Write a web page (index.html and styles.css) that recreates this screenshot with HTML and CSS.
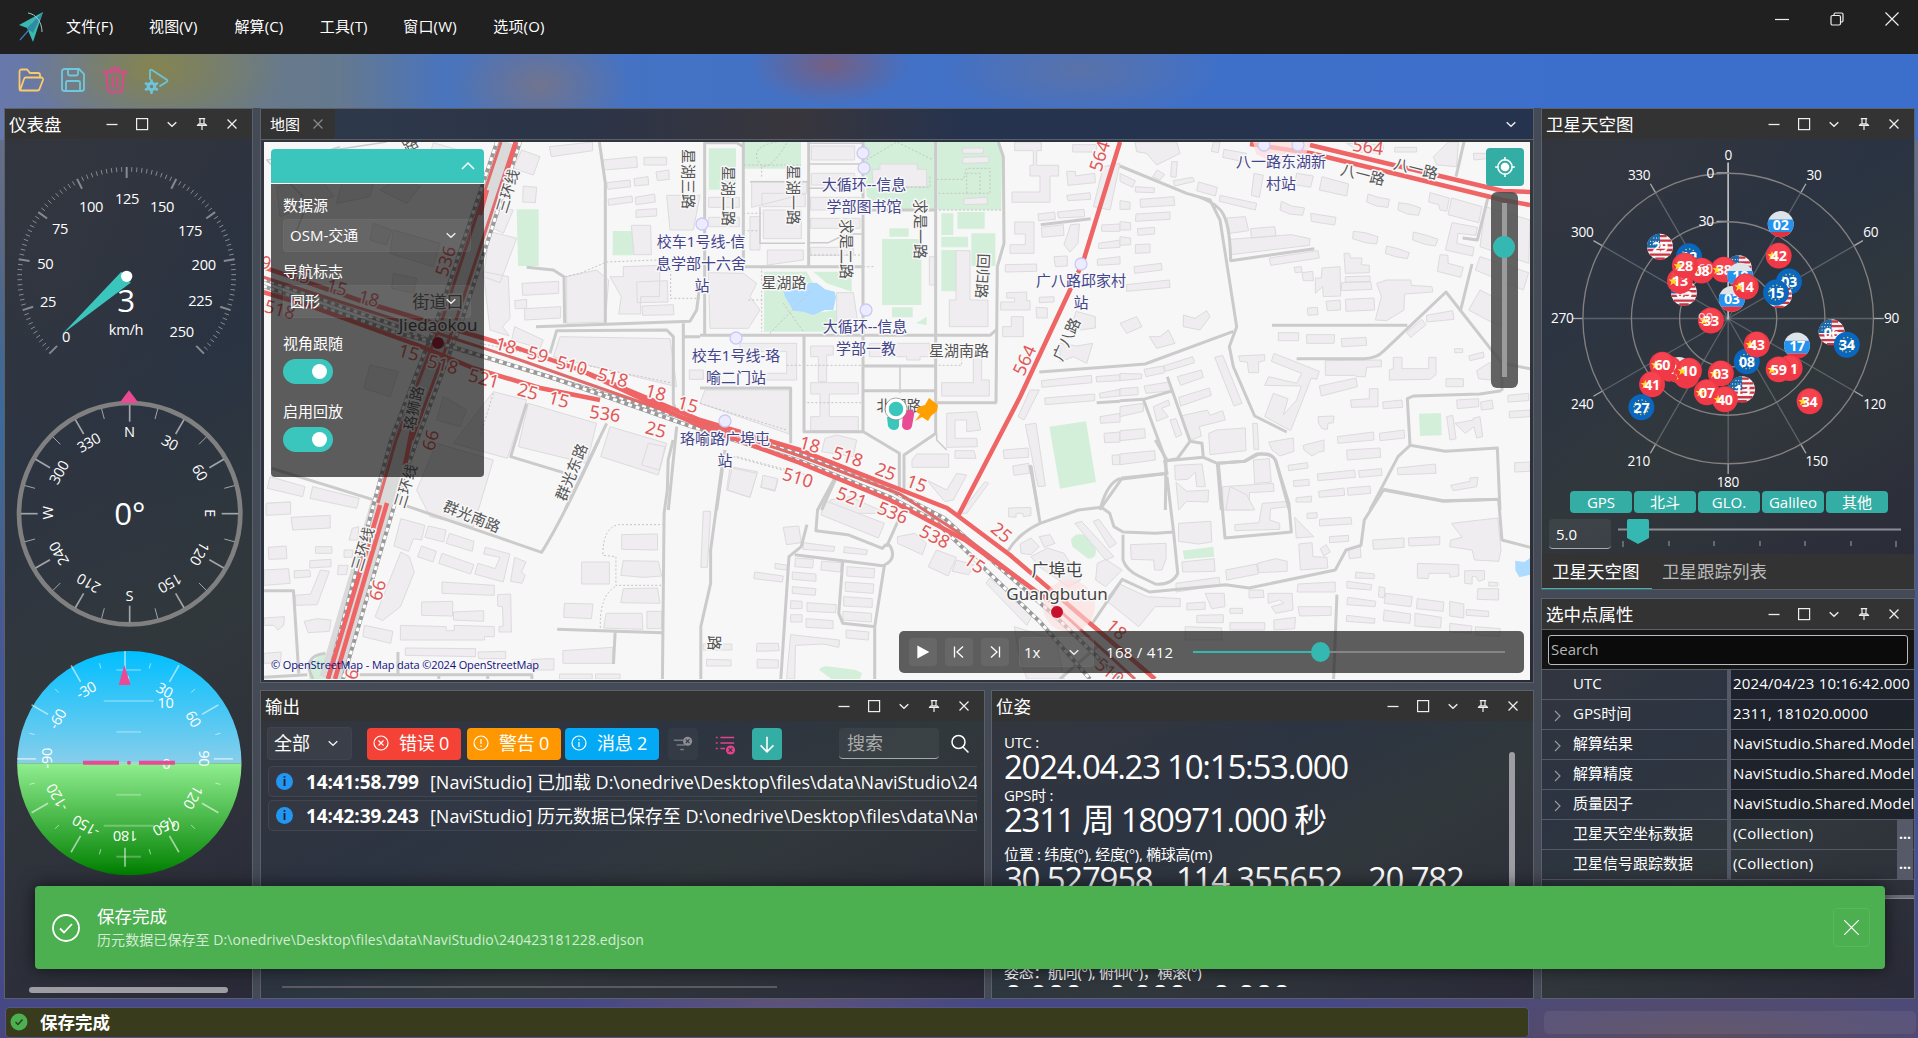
FILE: index.html
```html
<!DOCTYPE html>
<html lang="zh-CN">
<head>
<meta charset="utf-8">
<title>NaviStudio</title>
<link rel="stylesheet" href="styles.css">
</head>
<body>
<svg class="defs" aria-hidden="true">
  <symbol id="i-min" viewBox="0 0 16 16"><path d="M2.5 8.5h11" stroke-width="1.3"/></symbol>
  <symbol id="i-max" viewBox="0 0 16 16"><rect x="2.6" y="2.6" width="11" height="11" stroke-width="1.2"/></symbol>
  <symbol id="i-down" viewBox="0 0 16 16"><path d="M3.7 6.3 8 10.3l4.300-4" stroke-width="1.4"/></symbol>
  <symbol id="i-pin" viewBox="0 0 16 16"><path d="M4.800 2.700h6.400M6 3v5M10 3v5M3.500 9.300c.3-1 1-1.500 2.500-1.500h4c1.500 0 2.200.5 2.500 1.500zM8 9.500v4.500" stroke-width="1.2"/></symbol>
  <symbol id="i-x" viewBox="0 0 16 16"><path d="m3.500 3.500 9 9M12.500 3.500l-9 9" stroke-width="1.3"/></symbol>
  <symbol id="i-tools" viewBox="0 0 136 16">
    <use href="#i-min" x="0" width="16" height="16"/><use href="#i-max" x="30" width="16" height="16"/><use href="#i-down" x="60" width="16" height="16"/><use href="#i-pin" x="90" width="16" height="16"/><use href="#i-x" x="120" width="16" height="16"/>
  </symbol>
</svg>

<header class="titlebar">
  <svg class="logo" viewBox="0 0 26 32"><path d="M25 1 1 14l8 3 6 14z" fill="#3ab9b0"/><path d="m9 17 16-16-10 21z" fill="#2f8f96"/><path d="M2 29 23 5" stroke="#3b7fc4" stroke-width="1.200"/><path d="M10 2c8 1 14 9 14 19" fill="none" stroke="#9cc" stroke-width="1"/></svg>
  <nav class="menu"><span>文件(F)</span><span>视图(V)</span><span>解算(C)</span><span>工具(T)</span><span>窗口(W)</span><span>选项(O)</span></nav>
  <div class="win">
    <svg viewBox="0 0 16 16"><path d="M1 8.500h14"/></svg>
    <svg viewBox="0 0 16 16"><rect x="2" y="4.500" width="9.500" height="9.500" rx="1.500"/><path d="M5 4.500V3.500a1.500 1.500 0 0 1 1.500-1.500h6a1.500 1.500 0 0 1 1.500 1.500v6a1.500 1.500 0 0 1-1.500 1.500h-1"/></svg>
    <svg viewBox="0 0 16 16"><path d="m1.500 1.500 13 13M14.500 1.500l-13 13"/></svg>
  </div>
</header>

<div class="toolbar">
  <svg viewBox="0 0 28 28" stroke="#fbcb6b"><path d="M2.500 22V5.500a2 2 0 0 1 2-2H10l3 3.500h8a2 2 0 0 1 2 2v2M3 24.500 7 13a2 2 0 0 1 2-1.500h15a2 2 0 0 1 2 2.500l-3.500 9a2 2 0 0 1-2 1.500H4.500a2 2 0 0 1-2-2.500"/></svg>
  <svg viewBox="0 0 28 28" stroke="#70c8de"><path d="M3 5.500a2.500 2.500 0 0 1 2.500-2.500H20l5 5v14.500a2.500 2.500 0 0 1-2.500 2.500h-17A2.500 2.500 0 0 1 3 22.500zM9 3v5a1.500 1.500 0 0 0 1.500 1.500h7A1.500 1.500 0 0 0 19 8V3M7 25v-8.500A1.500 1.500 0 0 1 8.500 15h11a1.500 1.500 0 0 1 1.500 1.500V25"/></svg>
  <svg viewBox="0 0 28 28" stroke="#e54291"><path d="M2 6h24M10 5.500V4a2 2 0 0 1 2-2h4a2 2 0 0 1 2 2v1.500M5 6.500l2 17.500a2.500 2.500 0 0 0 2.500 2h9a2.500 2.500 0 0 0 2.500-2l2-17.500M11.500 11v10M16.500 11v10"/></svg>
  <svg viewBox="0 0 28 28" stroke="#6cc4dc"><path d="M7 13V5q0-2 2-1l14.500 9.500q1.800 1.300 0 2.500L17 20"/><circle cx="8.500" cy="20.500" r="3.300" stroke-width="3"/><path d="M8.500 14.500v2M8.500 24.500v2.500M3 17.500l2 1M12 22.500l2 1M3 23.500l2-1M12 18.500l2-1" stroke-width="2.600"/></svg>
</div>

<main class="dock">
  <section class="panel dash">
    <h2 class="head">仪表盘<svg class="tools"><use href="#i-tools"/></svg></h2>
    <svg class="speed" id="speed" viewBox="15 87 744 720"></svg>
    <svg class="compass" id="compass" viewBox="15 807 744 753"></svg>
    <svg class="attitude" id="attitude" viewBox="15 0 744 760"></svg>
    <div class="hscroll"></div>
  </section>

  <div class="center">
    <section class="panel mapdoc">
      <div class="tabs"><span class="tab">地图<svg class="ic dim"><use href="#i-x"/></svg></span><svg class="ic"><use href="#i-down"/></svg></div>
      <div class="map">
        <svg class="mapsvg" id="map" viewBox="264 142 1266 537"></svg>
        <div class="options">
          <div class="ohead"><svg viewBox="0 0 16 16"><path d="m2 11 6-6 6 6"/></svg></div>
          <div class="obody">
            <label>数据源</label><div class="combo">OSM-交通<svg class="ic"><use href="#i-down"/></svg></div>
            <label>导航标志</label><div class="combo">圆形<svg class="ic"><use href="#i-down"/></svg></div>
            <label>视角跟随</label><i class="toggle"></i>
            <label>启用回放</label><i class="toggle"></i>
          </div>
        </div>
        <div class="zoomctl">
          <div class="locate"><svg viewBox="0 0 20 20"><circle cx="10" cy="10" r="6.500"/><circle cx="10" cy="10" r="3.200" class="f"/><path d="M10 1v3M10 16v3M1 10h3M16 10h3"/></svg></div>
          <div class="vslider"><i></i></div>
        </div>
        <div class="player">
          <b><svg viewBox="0 0 28 28"><path class="f" d="M9 8.500v11l10-5.500z"/></svg></b>
          <b><svg viewBox="0 0 28 28"><path d="M9.500 8.500v11M18 8.500 12 14l6 5.500"/></svg></b>
          <b><svg viewBox="0 0 28 28"><path d="M18.500 8.500v11M10 8.500l6 5.500-6 5.500"/></svg></b>
          <div class="combo rate">1x<svg class="ic"><use href="#i-down"/></svg></div>
          <span class="count">168 / 412</span>
          <div class="hslider"><i></i></div>
        </div>
      </div>
    </section>

    <div class="bottom">
      <section class="panel output">
        <h2 class="head">输出<svg class="tools"><use href="#i-tools"/></svg></h2>
        <div class="obar">
          <div class="combo all">全部<svg class="ic"><use href="#i-down"/></svg></div>
          <span class="badge red"><svg viewBox="0 0 16 16"><circle cx="8" cy="8" r="7"/><path d="m5.500 5.500 5 5M10.500 5.500l-5 5"/></svg>错误 0</span>
          <span class="badge orange"><svg viewBox="0 0 16 16"><circle cx="8" cy="8" r="7"/><path d="M8 4v5M8 10.500v1.500"/></svg>警告 0</span>
          <span class="badge blue"><svg viewBox="0 0 16 16"><circle cx="8" cy="8" r="7"/><path d="M8 7v5M8 4v1.500"/></svg>消息 2</span>
          <span class="sq ghost"><svg viewBox="0 0 24 24" stroke="#777a80"><path d="M2 8h10M5 13h9M9 18h4"/><circle cx="17" cy="9" r="5" fill="#8d8f94" stroke="none"/><path d="m15 7 4 4M19 7l-4 4" stroke="#333" stroke-width="1.200"/></svg></span>
          <span class="sq"><svg viewBox="0 0 24 24" stroke="#e54291"><path d="M2 5h2M7 5h15M2 11h2M7 11h15M2 17h2M7 17h5"/><circle cx="18" cy="18.500" r="5" fill="#e54291" stroke="none"/><path d="m16 16.500 4 4M20 16.500l-4 4" stroke="#333" stroke-width="1.200"/></svg></span>
          <span class="sq go"><svg viewBox="0 0 24 24" stroke="#fff"><path d="M12 4v16M5 13.500l7 7 7-7"/></svg></span>
          <span class="find">搜索</span>
          <svg class="mag" viewBox="0 0 20 20"><circle cx="8.500" cy="8" r="6.500"/><path d="m13 13 5.500 5.500"/></svg>
        </div>
        <div class="log"><em>i</em><strong>14:41:58.799</strong><span>[NaviStudio] 已加载 D:\onedrive\Desktop\files\data\NaviStudio\240423181228.edjson</span></div>
        <div class="log"><em>i</em><strong>14:42:39.243</strong><span>[NaviStudio] 历元数据已保存至 D:\onedrive\Desktop\files\data\NaviStudio\240423181228.edjson</span></div>
        <div class="oscroll"></div>
      </section>
      <section class="panel pose">
        <h2 class="head">位姿<svg class="tools"><use href="#i-tools"/></svg></h2>
        <div class="pbody">
          <div class="ptext">
            <small>UTC :</small><p>2024.04.23 10:15:53.000</p>
            <small>GPS时 :</small><p>2311 周 180971.000 秒</p>
            <small class="gap">位置 : 纬度(°), 经度(°), 椭球高(m)</small><p class="pos"><span>30.527958</span><span>114.355652</span><span>20.782</span></p>
            <small class="att">姿态：航向(°), 俯仰(°)，横滚(°)</small><p class="angles"><span>0.000</span><span>0.000</span><span>0.000</span></p>
          </div>
          <i class="vbar"></i>
        </div>
      </section>
    </div>
  </div>

  <div class="right">
    <section class="panel sky">
      <h2 class="head">卫星天空图<svg class="tools"><use href="#i-tools"/></svg></h2>
      <svg class="skysvg" id="sky" viewBox="18 117 1119 1055"></svg>
      <div class="chips"><span>GPS</span><span>北斗</span><span>GLO.</span><span>Galileo</span><span>其他</span></div>
      <div class="scale"><span class="num">5.0</span>
        <svg viewBox="0 0 284 28"><path d="M0 10.500h283" stroke="#8b9096" stroke-width="2"/><path d="M5 22v6M51 22v5M96 22v5M142 22v5M187 22v5M233 22v5M278 22v6" stroke="#777d83" stroke-width="1.500"/><path d="M9 2q0-2 2-2h18q2 0 2 2v17l-11 6-11-6z" fill="#35b8b1"/></svg></div>
      <div class="stabs"><span class="on">卫星天空图</span><span>卫星跟踪列表</span></div>
    </section>
    <section class="panel props">
      <h2 class="head">选中点属性<svg class="tools"><use href="#i-tools"/></svg></h2>
      <div class="psearch"><span>Search</span></div>
      <div class="row"><u></u><span>UTC</span><b>2024/04/23 10:16:42.000</b></div>
      <div class="row"><u><svg viewBox="0 0 8 12"><path d="m1 1 5 5-5 5"/></svg></u><span>GPS时间</span><b>2311, 181020.0000</b></div>
      <div class="row"><u><svg viewBox="0 0 8 12"><path d="m1 1 5 5-5 5"/></svg></u><span>解算结果</span><b class="model">NaviStudio.Shared.Models</b></div>
      <div class="row"><u><svg viewBox="0 0 8 12"><path d="m1 1 5 5-5 5"/></svg></u><span>解算精度</span><b class="model">NaviStudio.Shared.Models</b></div>
      <div class="row"><u><svg viewBox="0 0 8 12"><path d="m1 1 5 5-5 5"/></svg></u><span>质量因子</span><b class="model">NaviStudio.Shared.Models</b></div>
      <div class="row coll"><u></u><span>卫星天空坐标数据</span><b>(Collection)</b><i>...</i></div>
      <div class="row coll"><u></u><span>卫星信号跟踪数据</span><b>(Collection)</b><i>...</i></div>
      <div class="endline"></div>
    </section>
  </div>
</main>

<footer class="status">
  <div class="msg"><svg viewBox="0 0 18 18"><circle cx="9" cy="9" r="8.500" fill="#4caf50"/><path d="m5.500 9 2.500 2.500 4.500-5" fill="none" stroke="#26401f" stroke-width="1.400"/></svg>保存完成</div>
  <div class="prog"></div>
</footer>

<div class="toast">
  <svg class="ok" viewBox="0 0 30 30"><circle cx="15" cy="15" r="13"/><path d="m9 15.500 4 4 8-8.500"/></svg>
  <div class="tmsg"><h3>保存完成</h3><p>历元数据已保存至 D:\onedrive\Desktop\files\data\NaviStudio\240423181228.edjson</p></div>
  <div class="tclose"><svg viewBox="0 0 16 16"><path d="m0 0 16 16M16 0 0 16"/></svg></div>
</div>
<script src="app.js"></script>
</body>
</html>
```
FILE: styles.css
```css
* { box-sizing: border-box; margin: 0; padding: 0; }
body {
  width: 1918px; height: 1038px; overflow: hidden; position: relative;
  display: flex; flex-direction: column;
  color: #fff; font: 15px/20px "Open Sans", "Noto Sans CJK SC", sans-serif;
  background:
    radial-gradient(ellipse 130px 70px at 155px 68px, #85844f, #85844f00),
    radial-gradient(ellipse 90px 60px at 540px 85px, #71748e, #71748e00),
    radial-gradient(ellipse 80px 40px at 830px 65px, #745f82, #745f8200),
    radial-gradient(ellipse 140px 50px at 1080px 70px, #5a72a8, #5a72a800),
    radial-gradient(ellipse 60px 200px at 0 420px, #3b6a9c, #3b6a9c00),
    radial-gradient(ellipse 420px 80px at 1700px 1038px, #5a4d62, #5a4d6200),
    radial-gradient(ellipse 200px 60px at 780px 1010px, #5f5377, #5f537700),
    linear-gradient(90deg, #6878ab 0, #6a7a88 200px, #65798f 340px, #4a74bb 440px, #4472c4 660px, #3c6fcc 1600px, #3c6fcb) 0 0 / 100% 140px no-repeat,
    linear-gradient(#6f7690, #50607c 40%, #4055a2 75%, #474680);
}
svg { flex: none; fill: none; display: block; }
.defs { position: absolute; width: 0; height: 0; }
.ic { width: 16px; height: 16px; stroke: #eee; }
.dim { stroke: #888; }

.titlebar { height: 54px; background: #202020; display: flex; align-items: center; padding: 0 18px; }
.logo { width: 26px; height: 32px; }
.menu { display: flex; margin: -2px 0 0 22px; flex: 1; letter-spacing: .15px; }
.menu span { width: 85.400px; white-space: nowrap; }
.menu span:first-child { width: 83px; }
.menu span:nth-child(4) { width: 83.500px; }
.menu span:nth-child(5) { width: 90px; }
.win { display: flex; gap: 39px; margin-top: -16px; }
.win svg { width: 16px; height: 16px; stroke: #eee; stroke-width: 1.200; }
.toolbar { height: 54px; display: flex; align-items: center; gap: 14px; padding: 0 0 2px 17px; }
.toolbar svg { width: 28px; height: 28px; stroke-width: 1.800; stroke-linecap: round; }

.dock { height: 891px; margin: 0 3px 0 4px; display: flex; gap: 7px; background: #454a57; }
.center { width: 1274px; display: flex; flex-direction: column; gap: 7px; }
.right { width: 374px; display: flex; flex-direction: column; gap: 8px; }
.bottom { display: flex; gap: 6px; height: 309px; }
.panel { border: 1px solid #5c6068; overflow: hidden;
  background: radial-gradient(ellipse at 20% 10%, #34384080, transparent 60%), linear-gradient(150deg, #32343c, #2a3342 35%, #31383c 60%, #2a2a38); }
.head { height: 30px; background: #333; display: flex; align-items: center; justify-content: space-between; padding: 0 12px 0 4px; font-size: 17.500px; font-weight: 400; }
.tools { width: 136px; height: 16px; stroke: #eee; }

.dash { width: 249px; }
.speed { width: 248px; height: 240px; }
.compass { width: 248px; height: 251px; }
.attitude { width: 248px; height: 253px; }
.hscroll { width: 199px; height: 6px; border-radius: 3px; background: #9d9da3; margin: 104px 0 0 24px; }

.mapdoc { height: 575px; }
.tabs { height: 31px; display: flex; align-items: center; justify-content: space-between; padding-right: 14px; background: linear-gradient(90deg, #2d3a4a, #2c3448 25%, #38363c 42%, #26334e 55%, #26334e); border-bottom: 1px solid #5c6068; }
.tab { width: 74px; height: 30px; background: #333; display: flex; align-items: center; padding-left: 9px; gap: 10px; white-space: nowrap; }
.map { margin: 2px 3px 3px; height: 538px; overflow: hidden; background: #f7f7f7; position: relative; }
.mapsvg { width: 1266px; height: 537px; font-family: "Noto Sans", "Noto Sans CJK SC", sans-serif; text-anchor: middle; }
.mapsvg text { dominant-baseline: central; paint-order: stroke; stroke: #f8f8f8; stroke-width: 3px; stroke-linejoin: round; font-size: 15px; fill: #555; }
.mapsvg .stop { fill: #44448c; }
.mapsvg .ref { fill: #e25757; font-size: 18px; }
.mapsvg .metro { fill: #444; font-size: 17px; }
.mapsvg .credit { fill: #101080; font-size: 11px; text-anchor: start; stroke: none; font-family: "Open Sans"; }
.mapsvg path { vector-effect: non-scaling-stroke; }
.bld { fill: #efedef; stroke: #dddbdd; stroke-width: 1; }
.park { fill: #d3efd9; }
.lake { fill: #addbff; }
.road { stroke: #cbcbcb; stroke-width: 3; stroke-linejoin: round; }
.foot { stroke: #c4c4c4; stroke-width: 1; stroke-dasharray: 2 2; }
.wide { stroke: #dadada; stroke-width: 20; }
.red { stroke: #ef6464; stroke-width: 4.500; stroke-linejoin: round; }
.redthin { stroke: #e06b6b; stroke-width: 3; }
.rail { stroke: #9a9a9a; stroke-width: 4; }
.railw { stroke: #fff; stroke-width: 3; stroke-dasharray: 4 4; }
.halt { fill: #ecebff; stroke: #cbc9f5; stroke-width: 1.300; }

.options { position: absolute; left: 7px; top: 7px; width: 213px; height: 328px; border-radius: 4px; overflow: hidden; }
.ohead { height: 35px; background: #3ac6bd; border-bottom: 1px solid #fff; display: flex; align-items: center; justify-content: flex-end; padding-right: 8px; }
.ohead svg { width: 16px; height: 16px; stroke: #fff; stroke-width: 1.500; }
.obody { height: 293px; background: rgba(15, 15, 15, .67); padding: 11px 12px; display: flex; flex-direction: column; }
.obody label { line-height: 20px; height: 24px; flex: none; }
.combo { height: 33px; background: #ffffff10; border: 1px solid #ffffff08; border-radius: 4px; display: flex; align-items: center; justify-content: space-between; padding: 0 11px 2px 6px; }
.obody .combo { width: 188px; flex: none; margin-bottom: 9px; }
.obody label:nth-of-type(n+3) { margin-top: 6px; height: 26px; }
.obody label:nth-of-type(4) { margin-top: 0; }
.toggle { width: 50px; height: 25px; border-radius: 13px; background: #3ac6bd; flex: none; padding: 5px; display: flex; justify-content: flex-end; margin-bottom: 17px; }
.toggle::after { content: ""; width: 15px; height: 15px; border-radius: 50%; background: #fff; margin-right: 1px; }
.zoomctl { position: absolute; right: 6px; top: 6px; width: 38px; }
.locate { width: 38px; height: 38px; border-radius: 4px; background: #34ada4; padding: 8px; }
.locate svg { width: 22px; height: 22px; stroke: #fff; stroke-width: 1.400; }
.f { fill: #fff; }
.vslider { width: 27px; height: 196px; margin: 6px 0 0 5px; border-radius: 6px; background: #4b4b4bdd; padding: 11px; }
.vslider::before { content: ""; display: block; width: 5px; height: 174px; background: #9b9b9b; }
.vslider i { display: block; width: 22px; height: 22px; border-radius: 50%; background: #35b8b1; margin: -141px 0 0 -9px; }
.player { position: absolute; left: 635px; bottom: 7px; width: 625px; height: 42px; border-radius: 5px; background: rgba(30, 30, 30, .71); display: flex; align-items: center; padding: 0 19px 0 10px; }
.player b { width: 28px; height: 28px; border-radius: 4px; background: #ffffff10; margin-right: 8px; }
.player b svg { width: 28px; height: 28px; stroke: #fff; stroke-width: 1.300; }
.player .rate { width: 75px; height: 30px; margin-left: 2px; padding-left: 4px; padding-bottom: 0; }
.count { margin-left: 12px; width: 87px; letter-spacing: .3px; white-space: nowrap; }
.hslider { flex: 1; height: 2px; background: linear-gradient(90deg, #35b8b1 127px, #858585 0); }
.hslider i { display: block; width: 19px; height: 20px; border-radius: 50%; background: #35b8b1; margin: -9px 0 0 118px; }

.output { width: 725px; }
.obar { display: flex; align-items: center; padding: 6px 0 0 6px; font-size: 18px; height: 39px; }
.all { width: 85px; margin-right: 15px; padding-right: 10px; background: #ffffff0c; }
.badge { width: 94px; height: 32px; border-radius: 4px; display: flex; align-items: center; padding: 0 0 2px 6px; gap: 10px; white-space: nowrap; letter-spacing: -.2px; }
.badge svg { width: 16px; height: 16px; stroke: #fff; stroke-width: 1.200; }
.badge.red { background: #f44336; margin-right: 6px; }
.badge.orange { background: #ff9800; margin-right: 4px; }
.badge.blue { background: #03a9f4; margin-right: 9px; }
.sq { width: 30px; height: 32px; border-radius: 4px; margin-right: 12px; display: flex; align-items: center; justify-content: center; }
.sq svg { width: 22px; height: 22px; stroke-width: 1.700; }
.sq.ghost { background: #ffffff08; }
.sq.go { background: #34ada4; margin-right: 57px; }
.find { width: 100px; height: 31px; border-radius: 4px; border-bottom: 1px solid #aaa; background: #ffffff0d; color: #aaa; padding: 5px 8px; }
.mag { width: 20px; height: 20px; stroke: #fff; stroke-width: 1.500; margin-left: 11px; }
.log { margin: 6px 7px -3px 7px; height: 31px; border: 1px solid #ffffff12; border-right: 0; border-radius: 5px 0 0 5px; background: #ffffff05; display: flex; align-items: center; font-size: 18px; white-space: nowrap; overflow: hidden; letter-spacing: -.02px; flex: none; }
.log em { width: 17px; height: 17px; border-radius: 50%; background: #2196f3; color: #223; font: 700 12px/17px "Open Sans", sans-serif; text-align: center; margin-left: 7px; flex: none; }
.log strong { margin-left: 13px; width: 124px; font-size: 19px; letter-spacing: -.1px; flex: none; }
.oscroll { height: 2px; width: 495px; background: #5b5b61; margin: 158px 0 0 21px; }

.pose { width: 543px; }
.pbody { display: flex; height: 266px; padding-left: 12px; overflow: hidden; }
.ptext { width: 505px; padding-top: 11px; white-space: nowrap; }
.pose small { display: block; font-size: 15px; line-height: 20px; letter-spacing: -.3px; }
.pose p { font-size: 33px; line-height: 29px; letter-spacing: -1.250px; height: 33px; }
.pose small.gap { margin-top: 6px; }
.pos span:first-child { display: inline-block; width: 172px; }
.pos span:nth-child(2) { display: inline-block; width: 192px; }
.pose small.att { margin-top: 65px; }
.angles span { display: inline-block; width: 104px; margin-top: -1px; }
.vbar { width: 6px; height: 200px; border-radius: 3px; background: #9d9da3; margin-top: 31px; }

.sky { height: 482px; flex: none; }
.skysvg { width: 372px; height: 352px; }
.chips { display: flex; gap: 2px; margin: 0 0 6px 28px; }
.chips span { width: 62px; height: 22px; border-radius: 4px; background: #34ada4; text-align: center; line-height: 22px; }
.scale { display: flex; padding-left: 7px; height: 35px; }
.num { width: 62px; height: 30px; background: #ffffff10; border-radius: 4px; border-bottom: 1px solid #aaa; padding: 5px 7px; margin-right: 7px; }
.scale svg { width: 284px; height: 28px; }
.stabs { height: 36px; background: #333; display: flex; font-size: 17.500px; line-height: 34px; color: #bbb; }
.stabs span { width: 110px; padding-left: 10px; white-space: nowrap; }
.stabs .on { color: #fff; border-bottom: 2px solid #35b8b1; }

.props { height: 401px; flex: none; }
.props .head { line-height: 18px; padding-bottom: 1px; }
.psearch { height: 41px; background: #141414; padding: 5px 6px; border-top: 1px solid #5c6068; border-bottom: 1px solid #5c6068; }
.psearch span { display: block; height: 30px; border: 1px solid #bbb; border-radius: 3px; background: #0b0b0b; color: #b5b5b5; padding: 3px 2px; }
.row { height: 30px; border-bottom: 1px solid #565a68; display: flex; white-space: nowrap; overflow: hidden; line-height: 27px; }
.row u { width: 31px; padding: 10px 0 0 12px; text-decoration: none; }
.row u svg { width: 8px; height: 12px; stroke: #999; stroke-width: 1.200; }
.row span { width: 154px; }
.row b { flex: 1; font-weight: 400; border-left: 4px solid #565a68; padding-left: 2px; background: #151820a0; overflow: hidden; letter-spacing: .2px; }
.row.coll b { background: none; }
.row i { width: 16px; background: #565a68; font: 700 14px/28px "Open Sans"; text-align: center; margin-right: 1px; }
.endline { height: 4px; margin-top: 15px; background: #6a6c76; border-bottom: 1px solid #888; }

.status { height: 39px; padding: 8px 2px 0 5px; display: flex; gap: 15px; }
.msg { width: 1524px; height: 31px; background: #383b1c; border: 1px solid #54568a; border-radius: 4px; display: flex; align-items: center; gap: 12px; padding: 0 0 2px 4px; font-size: 17.500px; font-weight: 700; }
.msg svg { width: 18px; height: 18px; }
.prog { width: 372px; height: 23px; margin-top: 4px; border-radius: 5px; background: #ffffff10; }

.toast { position: absolute; left: 35px; top: 886px; width: 1850px; height: 83px; border-radius: 4px; background: #4caf50; box-shadow: 0 0 18px #0009; display: flex; align-items: center; padding: 0 15px 0 16px; }
.ok { width: 30px; height: 30px; stroke: #fff; stroke-width: 1.800; }
.tmsg { flex: 1; margin-left: 16px; }
.toast h3 { font-size: 17.500px; font-weight: 400; line-height: 24px; }
.toast p { font-size: 14px; line-height: 22px; color: #d4ecd5; letter-spacing: .08px; margin-top: 1px; }
.tclose { width: 37px; height: 39px; border: 1px solid #5bb75f; border-radius: 4px; padding: 11px 10px; }
.tclose svg { width: 15px; height: 15px; stroke: #fff; stroke-width: 1.300; }

.speed text, .compass text, .attitude text, .skysvg text { fill: #fff; font-size: 44px; text-anchor: middle; dominant-baseline: central; letter-spacing: -1px; }
```
FILE: app.js
```js
const rad = d => d * Math.PI / 180;
const at = (cx, cy, r, a) => [cx + r * Math.sin(rad(a)), cy - r * Math.cos(rad(a))];
const tick = (cx, cy, a, r1, r2, w, c) => {
  const [x1, y1] = at(cx, cy, r1, a), [x2, y2] = at(cx, cy, r2, a);
  return `<path d="M${x1} ${y1}L${x2} ${y2}" stroke="${c}" stroke-width="${w}"/>`;
};
const label = (t, x, y, rot = 0, extra = '') =>
  `<text ${extra} transform="translate(${x} ${y}) rotate(${rot})">${t}</text>`;
const put = (id, s) => { document.getElementById(id).innerHTML = s; };

// Speedometer
let s = '';
for (let i = 0; i <= 100; i++) {
  const a = -135 + i * 2.7, major = i % 10 === 0;
  s += tick(380, 499, a, 328, major ? 295 : 314, major ? 6 : 3, '#868a8f');
}
[[0, 198, 680], [25, 144, 575], [50, 136, 461], [75, 180, 356], [100, 273, 290], [125, 381, 266], [150, 486, 290], [175, 570, 362], [200, 611, 464], [225, 601, 573], [250, 545, 665]]
  .forEach(([t, x, y]) => { s += label(t, x, y - 2); });
s += '<path d="M187 672 364 485 392 518z" fill="#3ac6bd"/><circle cx="380" cy="499" r="17" fill="#fff"/>';
s += label('3', 378, 569, 0, 'style="font-size:94px"') + label('km/h', 378, 658);
put('speed', s);

// Compass
s = '<circle cx="389" cy="1211" r="332" stroke="#808080" stroke-width="14"/>';
for (let a = 0; a < 360; a += 15) s += tick(389, 1211, a, 326, a % 30 ? 294 : 276, a % 30 ? 3 : 5, '#a2a5a8');
['N', 30, 60, 'E', 120, 150, 'S', 210, 240, 'W', 300, 330].forEach((t, i) => {
  const [x, y] = at(388, 1209, 246, i * 30);
  s += label(t, x, y, t === 'S' ? 0 : i * 30);
});
s += '<path d="M387 841 416 879h-58z" fill="#e84a94"/>' + label('0°', 389, 1209, 0, 'style="font-size:94px"');
put('compass', s);

// Attitude indicator
s = `<defs><linearGradient id="air" x2="0" y2="1"><stop stop-color="#00bfff"/><stop offset="1" stop-color="#87ceeb"/></linearGradient>
<linearGradient id="land" x2="0" y2="1"><stop stop-color="#90ee90"/><stop offset="1" stop-color="#008000"/></linearGradient></defs>
<path d="M51 400a337 337 0 0 1 674 0z" fill="url(#air)"/><path d="M51 400a337 337 0 0 0 674 0z" fill="url(#land)"/>`;
for (let a = 0; a < 360; a += 15) s += tick(375, 387, a, a % 30 ? 297 : 324, a % 30 ? 281 : 267, a % 30 ? 3 : 5, '#ffffff90');
[0, 30, 60, 90, 120, 150, 180, -150, -120, -90, -60, -30].forEach((t, i) => {
  const [x, y] = at(376, 385, 238, i * 30);
  s += label(t, x, y, i * 30);
});
[[120, 37], [213, 75], [306, 37], [400, 75], [495, 37], [588, 75], [681, 37]]
  .forEach(([y, w]) => { s += `<path d="M${386 - w} ${y}h${w * 2}" stroke="#ffffff45" stroke-width="6"/>`; });
s += label('10', 497, 215) + label('0', 499, 401) + label('-10', 507, 586);
s += '<path d="M373 105 392 165h-36zM249 393h108v12h-108zM417 393h108v12h-108z" fill="#e84a94"/><circle cx="387" cy="399" r="6" fill="#e84a94"/>';
put('attitude', s);

// Sky plot
s = '';
for (let a = 0; a < 360; a += 30) {
  s += tick(578, 655, a, 0, 438, 4, '#ffffff38') + tick(578, 655, a, 438, 468, 4, '#a6a9ab');
}
s += '<path d="M578 655V186" stroke="#b9bcbe" stroke-width="5"/><path d="M543 217h35M543 363h35" stroke="#b9bcbe" stroke-width="4"/>';
[146, 291, 437].forEach(r => { s += `<circle cx="578" cy="655" r="${r}" stroke="#84807f" stroke-width="4"/>`; });
[[0, 578, 163], [30, 836, 224], [60, 1007, 396], [90, 1069, 655], [120, 1018, 913], [150, 844, 1083], [180, 577, 1146], [210, 309, 1083], [240, 139, 913], [270, 79, 655], [300, 139, 396], [330, 310, 224], [0, 524, 217], [30, 512, 363]]
  .forEach(([t, x, y]) => { s += label(t, x, y - 2, 0, 'style="font-size:41px"'); });
const disc = {
  C: '<circle r="39" fill="#f03846"/><circle cy="-9" r="28" fill="#ff5a62" opacity=".35"/><path d="m-20-13 4 9 10 0-8 7 3 10-9-6-9 6 3-10-8-7h10z" fill="#ffdc20"/>',
  E: '<circle r="39" fill="#0a67c0"/><circle r="22" stroke="#e8d340" stroke-width="4" stroke-dasharray="4 7.500"/>',
  R: '<circle r="39" fill="#dfe4e8"/><path d="M-36-14h72a39 39 0 0 1-5 38h-62a39 39 0 0 1-5-38z" fill="#2492ee"/><path d="M-31 24a39 39 0 0 0 62 0z" fill="#e5303d"/>',
  G: '<circle r="39" fill="#f3f3f3"/><path d="M-20-32H20M-34-18H34M-38-4H38M-38 10H38M-31 24H31M-14 36H14" stroke="#c93645" stroke-width="7"/><path d="M0-39V3h-39A39 39 0 0 1 0-39z" fill="#1c67a6"/><path d="M-30-16h28M-30-6h28M-20-26h18" stroke="#fff" stroke-width="3" stroke-dasharray="3 5"/>'
};
[['G', 29, 373, 439], ['E', 12, 460, 468], ['G', '05', 445, 577], ['C', 13, 433, 542], ['C', '08', 498, 511], ['C', 28, 448, 496],
 ['G', 14, 610, 504], ['C', 38, 565, 508], ['R', 18, 614, 526], ['R', '03', 589, 596], ['C', 14, 631, 559], ['R', '02', 736, 371], ['C', 42, 730, 466],
 ['E', '03', 761, 544], ['G', 15, 731, 584], ['E', 15, 722, 577], ['C', 33, 526, 661], ['G', '06', 889, 696], ['E', 34, 935, 734], ['R', 17, 785, 736], ['E', '08', 634, 784], ['C', 43, 664, 733],
 ['C', 31, 763, 804], ['C', 59, 730, 808], ['C', 34, 823, 904], ['R', 11, 430, 810], ['C', 42, 400, 806], ['C', 10, 452, 827], ['C', 10, 460, 812], ['C', 60, 380, 794], ['C', 41, 349, 853], ['E', 27, 317, 922],
 ['G', 13, 620, 868], ['C', '03', 556, 820], ['C', '07', 514, 877], ['C', 40, 568, 898]]
  .forEach(([k, n, x, y]) => {
    s += `<g transform="translate(${x} ${y})">${disc[k]}<text style="font-size:43px;font-weight:700">${n}</text></g>`;
  });
s += label('60', 509, 506, 0, 'style="font-size:41px;opacity:.75"') + label('90', 510, 653, 0, 'style="font-size:41px;opacity:.75"');
put('sky', s);

// Street map: each sheet has its own local grid, placed by origin and scale
const sheets = [
  { o: [260, 110], k: [1 / 3, 1 / 3],
    park: 'M770 298h66v170h-62zM1058 363h62v73h-62z',
    bld: ['868 110 998 96 998 122 874 140', '520 98 630 130 622 160 510 130', '785 120 840 140 820 195 760 175', '1028 150 1130 140 1132 172 1030 180', '1152 142 1220 142 1220 165 1152 165', '1040 218 1110 210 1112 230 1044 238', '1122 206 1164 200 1166 224 1124 228', '1044 268 1116 258 1118 276 1046 286', '1126 262 1184 252 1186 276 1128 284', '1128 300 1190 296 1190 318 1128 322', '1188 186 1226 180 1228 208 1192 212', '1220 256 1320 256 1300 360 1230 360', '1114 346 1172 346 1174 434 1122 434', '790 228 830 232 826 278 788 276', '710 290 760 300 730 370 690 350', '690 365 770 385 720 518 670 500', '670 485 745 500 750 625 728 650 748 678 690 660', '786 520 896 514 896 550 788 556', '764 572 800 568 800 595 766 596', '794 596 902 590 902 624 794 630', '920 500 1010 480 1046 510 1036 636 920 640', '1050 500 1090 500 1090 470 1200 466 1198 560 1142 560 1142 612 1076 612 1084 560', '1130 516 1222 512 1224 576 1132 578', '1146 588 1240 584 1242 614 1148 616', '900 680 1230 686 1250 830 880 740', '764 650 850 690 840 715 755 690', '1288 780 1330 780 1330 808 1288 808', '700 845 800 870 742 1045 580 1000', '805 880 1010 940 980 1060 775 1010', '1050 950 1220 1000 1195 1095 1022 1040', '1165 1000 1215 1010 1198 1080 1145 1065', '330 765 415 785 390 860 312 835', '30 1100 135 1130 128 1160 22 1135', '158 1130 298 1165 290 1195 150 1165', '530 1000 700 1050 640 1250 510 1220 470 1140', '20 1180 90 1176 90 1200 20 1200', '50 230 180 200 220 260 60 320', '250 200 350 180 330 260 230 280', '360 240 420 200 480 230 440 280', '340 340 395 360 380 405 330 390', '400 360 540 400 520 470 390 430', '400 490 470 505 460 550 395 535', '550 860 620 900 600 950 530 930'],
    road: ['M1018 96 1036 220 1036 640M828 650 1290 634 1310 600 1320 520M800 472 880 480 912 500 914 640M870 730 890 662 1220 660 1240 680 1240 880 1250 910 1270 910 1270 640M800 880 752 1040 950 1100M1040 940 915 1200M35 1075 375 1180M1250 950 1225 1200M1270 680H1320', 'M130 260 20 150 380 96M35 170 240 110M130 310 100 390'],
    foot: 'M915 500 960 490 1040 456 1190 450M1232 480V565H1320M660 700 1240 820M700 850 660 980' },
  { o: [700, 110], k: [1 / 3, 1 / 3],
    park: 'M26 115h82v124h-82zM133 96h170v80h-170zM490 96H705V300H560L500 260zM712 96H895L906 140 904 300H712zM568 355h58v25h-58zM546 387h118v198h-118zM724 310h36v65h-36zM772 306h82v50h-82zM724 380h80v32h-80zM724 420h44v124h-44zM814 370h72v98h-72zM576 592h62v30h-62zM648 640 680 620V645zM340 485 455 485V545L380 520zM192 485H320L340 520 300 540 340 610 410 600V665H192zM1048 950 1158 934 1188 1116 1080 1136z',
    lake: 'M250 542 315 520 350 518 375 538 404 545 408 562 400 600 375 600 340 615 310 605 280 602 255 560z',
    bld: ['334 108 464 108 464 150 334 150', '334 190 464 190 464 225 334 225', '155 214 320 214 320 250 155 292', '186 250 316 250 316 290 186 290', '190 300 304 300 304 386 190 386', '150 320 180 320 180 420 150 420', '26 262 118 262 118 292 26 292', '26 322 118 322 118 350 26 350', '332 262 480 262 480 300 332 300', '332 325 480 325 480 355 332 355', '202 420 310 420 310 450 202 465', '332 412 460 412 460 436 332 436', '516 178 540 178 540 162 652 162 652 178 680 178 680 230 520 230', '788 114 850 114 850 130 788 130', '788 142 866 140 866 158 788 160', '792 266 862 262 862 282 792 284', '768 422 810 422 810 570 864 570 864 650 748 650 748 570 768 570', '688 440 706 440 706 525 688 525', '25 488 130 490 170 520 150 560 180 600 145 655 30 655', '410 548 460 548 474 640 410 640', '120 700 290 700 290 810 160 810 160 790 260 790 260 725 120 725', '332 708 400 708 400 735 380 735 380 815 355 815 355 740 332 740', '332 818 475 818 475 852 388 852 388 920 475 920 475 962 332 962 332 920 360 920 360 852 332 852', '508 700 690 700 690 740 660 740 660 750 620 750 620 740 508 740', '820 740 845 740 845 810 868 810 868 858 725 858 725 818 820 818', '740 910 830 905 842 960 800 965 800 930 765 930 765 985 830 985 832 1010 740 1012', '765 1022 822 1022 828 1045 765 1045', '650 1032 746 1032 746 1072 636 1072 636 1050', '15 840 268 840 268 972 0 880', '410 975 470 990 460 1040 365 1025 375 985', '90 1070 172 1085 150 1162 80 1140', '190 1098 234 1108 225 1144 182 1132', '944 96 1024 96 1024 122 1010 122 1010 166 1076 166 1076 198 1050 198 1050 277 936 277 936 246 1020 246 1020 198 990 198 990 166 1000 166 1000 122 944 122', '1118 104 1190 104 1190 126 1118 126', '1100 184 1126 184 1126 198 1184 190 1186 218 1104 226', '1100 256 1170 248 1172 268 1104 272', '1014 312 1064 306 1066 328 1016 332', '1072 306 1152 298 1154 320 1076 324', '944 336 1002 336 1002 430 930 430 930 404 976 404 976 372 944 372', '1024 352 1090 344 1092 376 1026 382', '1112 344 1138 342 1134 400 1110 426 1092 404', '1062 440 1102 438 1102 468 1066 470', '916 464 1010 462 1010 484 916 486', '920 548 980 546 980 572 990 572 990 600 902 600 902 576 944 576 944 564 920 564', '1018 562 1062 560 1062 576 1018 578', '1008 592 1042 594 1042 624 1010 624', '934 620 970 620 970 680 908 680 908 650 934 650', '1080 700 1130 708 1178 700 1160 760 1120 740 1080 756', '1128 604 1186 620 1186 654 1140 660 1118 640', '1210 170 1260 160 1230 300 1180 290', '1205 345 1260 342 1260 364 1205 364', '1196 400 1260 390 1260 412 1196 416', '1192 448 1260 440 1260 462 1192 466', '1024 812 1174 796 1176 818 1026 832', '1188 800 1260 794 1260 812 1190 816', '1034 864 1184 852 1184 872 1036 884', '1198 850 1260 838 1260 858 1200 864', '1200 920 1260 910 1260 936 1202 940', '1212 970 1260 966 1260 996 1214 998', '976 944 1008 940 1036 1128 1014 1130', '910 1020 984 1014 986 1042 912 1046', '938 1068 986 1060 988 1090 942 1096', '990 840 1018 840 972 930 954 920', '1236 1036 1260 1034 1260 1064 1238 1064', '680 1110 740 1140 770 1090 800 1095 760 1170 735 1175', '855 1115 866 1120 800 1210 780 1210', '390 1170 450 1160 560 1210 380 1210'],
    road: ['M14 96V676M130 96V470M14 98H110L130 110M326 96V470M130 470H490M489 96V970M0 676H870L888 660M707 96V970M895 96 910 140 912 400 892 470 888 878M312 680V965H490L598 1030V1140M708 970 612 1035V1150M492 768H707M492 842H707M490 300H707M707 878H890M1018 786 1260 768M1022 344 1172 326M990 1065 1014 1200M1190 878 1260 874M410 1100 365 1200M75 1020 50 1200M1200 1200Q1220 1120 1260 1105M0 834H272V1000', 'M326 100H486M326 162H486M150 215H326M180 290V400H315M326 235H480M326 398H385L440 372H488M600 768V850M710 970V990L740 1020'],
    foot: 'M310 878H490M260 766H785V740M130 310H190M130 362H180M185 470V665M145 570H188M330 545 200 680M250 580 310 665M330 435H490M490 470H520V465M500 150 590 96 700 150M690 200V232H560M710 208H790L800 175H870V250H710M800 250V190H840V250M705 300H906M0 880 260 960M110 1040 340 1100M133 165H303M185 200V165M230 96Q150 110 175 155T260 100' },
  { o: [1120, 110], k: [1 / 3, 1 / 3],
    park: 'M897 911 963 909 965 976 900 978z',
    bld: ['45 96 170 96 180 130 110 165 80 130 50 125', '280 96 300 96 295 128 274 124', '155 155 172 155 168 202 152 200', '312 118 380 130 374 156 308 142', '112 180 134 194 120 210 98 200', '160 212 218 202 224 214 164 228', '236 216 292 232 286 258 230 242', '402 190 430 196 418 262 394 256', '530 190 580 198 572 232 524 224', '606 200 686 222 680 258 598 240', '300 256 410 280 406 300 298 274', '46 230 104 234 102 248 46 246', '60 268 162 260 164 286 62 292', '48 312 150 306 150 328 46 334', '52 356 104 352 104 372 54 376', '46 404 90 402 90 428 46 430', '0 272 30 276 30 298 0 298', '0 335 32 338 32 360 0 360', '0 380 32 384 32 404 0 406', '42 470 124 460 126 480 44 490', '20 524 148 510 150 532 20 544', '0 190 46 212 38 232 0 214', '484 274 515 288 554 294 548 316 508 312 480 300', '572 310 648 322 644 345 610 340 574 334', '744 252 775 262 808 268 804 292 770 288 740 276', '836 278 866 282 902 294 896 316 862 312 834 300', '700 364 735 368 774 380 770 402 736 398 698 386', '880 366 920 376 954 388 946 408 912 402 878 390', '800 408 834 416 868 428 862 446 826 440 796 430', '930 248 988 264 980 304 960 300 956 284 926 276', '995 264 1086 290 1076 338 984 314', '996 338 1072 352 1068 376 1014 370 1010 400 1062 412 1058 438 976 420', '960 434 984 436 984 460 1030 472 1022 502 952 484', '320 324 376 320 386 362 330 370', '392 356 464 350 468 378 394 384', '330 388 514 374 570 386 568 406 334 434', '448 444 594 422 598 444 452 466', '522 472 544 470 546 486 526 488', '606 474 660 470 662 558 610 560 608 530 586 550 586 504 604 504', '546 488 578 484 580 512 550 512', '672 430 688 430 692 444 726 444 724 464 748 466 748 488 676 490', '665 518 752 514 756 538 664 542', '676 500 750 498 750 516 676 516', '676 568 762 564 764 600 678 604', '618 574 660 570 662 600 622 602', '562 594 592 592 594 614 564 616', '770 520 800 510 872 510 874 526 936 530 938 546 854 552 852 600 800 632 766 630 784 560', '475 668 536 668 536 692 475 692', '560 674 644 674 642 700 560 700', '664 686 738 682 740 706 666 710', '920 616 998 602 1002 628 920 636', '905 628 918 644 872 682 860 668', '1004 716 1028 716 1028 728 1004 728', '1046 738 1090 726 1092 742 1050 752', '820 742 846 742 846 776 926 776 926 742 948 742 948 794 930 808 808 810 808 780 820 776', '978 806 1030 806 1030 830 978 830', '616 752 784 750 784 770 740 772 736 800 710 800 704 796 616 796', '598 828 708 804 712 830 604 858', '692 870 748 866 748 836 774 836 774 890 694 892', '788 876 846 870 848 892 790 896', '462 730 598 784 590 808 574 804 512 962 434 920 460 850 504 866 490 915 530 870 544 828 434 826 446 800 530 820 545 790 454 754', '594 920 642 918 640 938 624 940 622 958 606 956 596 940', '356 738 434 734 434 752 416 756 416 788 386 788 382 756 360 754', '284 742 308 736 366 880 342 888', '130 768 218 740 224 758 138 784', '72 778 130 768 134 788 78 800', '172 800 244 780 250 802 182 826', '176 862 268 834 274 856 182 888', '72 828 148 816 154 842 78 850', '0 790 66 792 64 806 0 812', '0 836 54 832 54 854 0 858', '0 890 70 880 70 904 0 920', '0 962 74 956 76 984 0 992', '0 1032 104 1022 106 1050 0 1064', '100 890 145 870 150 885 125 895 145 920 110 934', '150 930 168 926 186 974 168 982', '182 918 262 900 270 916 308 902 316 930 238 950 244 978 214 990', '266 970 290 960 376 954 378 1022 270 1034', '398 940 412 940 416 1018 402 1018', '446 996 520 984 522 1024 480 1038 456 1020', '550 1006 612 990 612 1024 596 1026 576 1038 552 1020', '652 980 760 966 762 990 654 1000', '778 970 852 960 854 984 780 992', '680 1020 780 1014 782 1042 682 1050', '504 1066 562 1058 564 1074 506 1082', '520 1112 566 1108 568 1126 522 1130', '528 1164 574 1158 574 1176 528 1176', '592 1092 704 1080 706 1102 594 1112', '716 1082 784 1076 786 1096 718 1102', '596 1144 672 1134 674 1156 598 1162', '682 1134 750 1128 752 1150 684 1156', '832 1074 946 1062 948 1090 834 1094', '992 1126 1050 1114 1050 1104 1074 1102 1070 1130 1000 1142', '1010 870 1076 866 1076 890 1012 896', '1082 876 1116 870 1120 896 1084 900', '980 920 998 916 1008 986 990 990', '1005 940 1060 930 1060 924 1080 920 1088 980 1070 984 1062 950 1036 970', '1070 782 1112 756 1112 810 1076 806', '1080 540 1160 580 1140 650 1046 600', '1080 440 1226 488 1210 540 1066 480', '1096 290 1230 330 1226 460 1080 410', '985 96 1015 96 1010 170 950 165 940 140', '1184 1058 1230 1056 1230 1084 1184 1086', '1168 904 1230 900 1230 920 1168 924', '1164 856 1226 850 1226 872 1164 876', '0 640 50 620 66 650 20 670', '190 615 225 625 260 602 270 620 240 660 190 650', '88 680 120 680 145 660 165 700 110 715', '164 1066 246 1062 256 1130 230 1130 226 1086 204 1108 166 1110', '168 1116 200 1144 266 1140 264 1176 200 1174 176 1200', '308 1130 460 1120 462 1144 388 1148 388 1200 308 1200', '400 1050 448 1046 454 1116 404 1120', '824 112 890 112 890 126 824 126', '1060 130 1100 130 1100 146 1062 150', '680 100 790 104 790 130 720 126'],
    road: ['M0 168 200 250 270 270 300 330 350 650 328 710 340 770 404 918 500 966M200 250Q280 270 305 305T332 452L583 416M0 768 75 762 340 664M456 646H862M530 746H730Q770 746 790 724L978 546 1146 760 1230 776M1056 462 1022 600M1104 262 1072 390 1028 384M1032 96 1008 200M142 800 210 994 172 1046 138 1052 136 1200M0 872 70 868 160 842M70 868 138 1052 250 1042 246 1000 210 994M250 1042 292 1060 372 1054 410 1032H440Q460 1034 468 1056L508 1200M0 1108 145 1090M292 1060 304 1200M750 1200 834 1040 870 1006 976 1024 1132 1014 1140 1200M870 1006 862 866 880 858 1080 852 1144 842M1146 760V842M790 1138 970 1172 1136 1168'],
    foot: '' },
  { o: [260, 440], k: [1 / 2.45, 1 / 3],
    park: 'M1370 690Q1375 675 1400 680L1460 690 1475 700 1470 717H1400zM120 700Q130 640 170 640L200 717H120z',
    bld: ['15 190 75 186 75 222 15 226', '76 232 172 226 172 264 80 270', '20 322 64 318 66 356 22 358', '10 390 70 386 74 430 10 436', '136 320 176 320 176 340 136 340', '122 362 174 358 174 380 122 384', '84 392 122 390 124 410 84 414', '148 390 170 394 140 494 88 496 86 466 124 462', '10 534 60 530 58 556 44 570 34 556 10 556', '108 544 140 536 174 540 170 574 118 578', '10 640 52 636 50 668 10 670', '345 236 404 256 396 300 376 296 364 334 328 318', '412 258 456 270 450 306 404 292', '464 280 524 304 520 334 456 310', '396 318 432 334 424 366 386 350', '446 340 524 374 516 402 438 370', '552 322 612 342 596 426 526 402 534 370 576 386 588 352 548 342', '624 352 652 366 640 396 650 406 642 430 614 424', '345 336 366 350 378 396 344 500 300 542 282 530', '446 426 574 436 574 466 446 460', '396 486 472 484 472 528 396 526', '474 516 548 512 548 544 474 540', '344 556 456 560 456 572 476 572 476 556 574 560 574 590 550 590 550 600 344 600', '582 464 614 462 616 576 586 576 586 560 596 558 594 500 582 498', '256 556 326 574 320 610 252 590', '356 624 528 626 528 650 356 646', '534 636 602 634 602 656 536 656', '666 658 720 656 720 690 666 690', '886 284 974 282 974 330 886 328', '788 366 856 366 856 432 788 432', '890 362 976 364 984 408 940 412 884 406', '890 446 974 444 980 490 884 488', '746 490 816 492 812 536 744 532', '848 520 936 520 938 568 842 564', '948 514 984 514 984 566 948 566', '742 632 864 622 864 670 742 670', '734 702 814 702 814 717 734 717', '822 702 882 702 882 717 822 717', '1086 214 1104 214 1096 382 1080 382', '1282 262 1320 258 1326 308 1290 314', '1380 180 1530 250 1515 294 1375 225', '1332 308 1408 320 1406 334 1330 328', '1432 320 1488 330 1486 344 1430 338', '1212 396 1282 408 1280 426 1210 416', '1262 370 1292 376 1290 390 1262 386', '1312 354 1356 358 1354 384 1310 380', '1376 364 1424 368 1422 396 1374 390', '1304 396 1362 402 1362 424 1304 418', '1304 440 1362 446 1360 466 1304 460', '1300 482 1328 484 1328 506 1300 506', '1340 488 1412 494 1410 518 1340 514', '1300 524 1328 524 1328 546 1300 546', '1338 536 1404 542 1404 566 1338 562', '1438 380 1506 386 1504 414 1438 408', '1434 426 1504 432 1502 460 1434 454', '1430 470 1500 476 1500 502 1430 498', '1428 514 1498 520 1498 546 1428 540', '1436 570 1492 576 1490 600 1436 594', '1300 584 1420 600 1418 622 1380 612 1312 616 1310 717 1290 717', '1218 610 1270 610 1272 632 1216 634', '1218 658 1270 660 1270 684 1218 684', '1086 612 1156 612 1156 630 1086 630', '1094 658 1154 660 1154 678 1094 678', '1156 84 1218 100 1200 172 1146 150', '1232 106 1268 116 1262 150 1228 142', '226 265 242 260 240 300 218 300', '206 330 228 330 226 352 206 352', '192 376 216 376 212 404 190 404'],
    road: ['M355 196 690 337Q740 240 830 0M10 452H82L95 700M10 712 116 704M240 704H666V717M338 636V704M438 704V717M558 704V717M728 568 984 578M870 578 866 672M1012 0 1000 60 998 150 990 220 986 717M1134 60 1104 330V430L1080 560V717M1410 110 1366 210 1362 272 1440 284 1525 325Q1540 300 1548 330T1530 375L1506 560V717M1340 254 1326 320 1296 350 1276 717M1310 344 1530 378M1428 360 1418 520 1428 550 1508 560M1535 320 1568 230M160 640Q100 650 130 717M165 640Q210 630 216 690L200 717'],
    foot: 'M990 254H880Q840 260 840 346L872 350V436H985M870 440Q830 470 834 570M1160 50 1280 90' },
  { o: [890, 440], k: [1 / 2.412, 1 / 3],
    park: 'M706 332 780 320 782 350 710 358zM436 300Q446 276 470 286L496 326Q500 356 478 356L440 320z',
    lake: 'M1508 362 1530 366 1544 354V404L1518 412 1508 390z',
    bld: ['18 290 60 280 88 310 78 344 18 310', '112 330 160 352 140 408 92 380', '160 360 202 374 190 404 150 394', '240 414 346 520 330 556 232 430', '314 312 340 294 360 320 340 344 316 340', '360 290 386 284 398 310 372 322', '340 350 380 324 420 340 460 420 430 440 360 380', '446 250 462 244 540 350 520 360', '490 244 504 238 546 310 530 324', '500 370 520 358 560 390 520 440 496 420', '520 480 550 430 620 470 700 476 700 500 640 500 600 560', '286 204 340 202 340 226 322 230 320 220 304 220 304 232 286 230', '300 560 400 600 420 717 330 717 310 640', '696 250 774 244 776 306 744 312 696 304', '580 314 666 310 666 356 656 390 638 390 636 360 582 358', '704 366 782 356 784 394 706 396', '690 430 794 412 796 436 690 456', '810 390 884 372 888 402 812 420', '886 370 930 356 958 364 958 394 890 398', '986 312 1018 308 1020 350 1054 352 1056 384 990 390', '1038 326 1052 314 1062 336 1046 348', '976 232 1022 290 980 294', '1006 220 1030 218 1030 234 1006 236', '1036 238 1112 232 1114 252 1036 258', '1060 290 1106 286 1106 304 1060 308', '1106 330 1134 314 1136 352 1108 356', '1164 300 1240 294 1240 322 1166 328', '1250 294 1326 290 1326 314 1252 318', '1354 250 1466 234 1474 330 1468 364 1410 360 1404 330 1350 320 1352 300 1380 292', '1272 370 1372 374 1372 408 1350 412 1350 400 1300 400 1298 416 1272 414', '1386 392 1434 392 1434 418 1420 424 1412 408 1404 410 1404 432 1386 430', '1418 446 1468 446 1468 480 1416 478', '1444 426 1466 428 1466 438 1444 438', '1124 396 1168 402 1168 416 1122 414', '1102 424 1162 434 1160 450 1102 444', '1104 472 1172 484 1170 500 1102 494', '1180 440 1194 444 1192 474 1178 470', '1196 460 1260 470 1256 500 1192 490', '1272 476 1336 486 1334 514 1270 506', '1350 484 1384 492 1384 534 1350 528', '1390 508 1444 514 1444 530 1390 526', '1102 526 1170 536 1168 550 1100 544', '1192 510 1256 522 1254 550 1190 542', '1266 520 1330 532 1328 564 1266 558', '1350 550 1404 558 1402 580 1350 576', '1412 560 1472 566 1470 590 1412 584', '984 432 1074 426 1074 456 982 456', '984 500 1064 500 1064 526 988 528', '740 526 804 524 804 548 740 548', '820 548 904 548 904 570 820 570', '716 490 760 486 760 508 716 510', '760 460 806 460 808 500 776 506', '866 450 900 450 902 472 866 474', '912 460 970 460 972 510 930 520 920 500 950 490 940 480 912 490', '926 540 978 532 976 566 926 570', '820 505 850 505 850 520 820 520', '712 560 800 564 800 600 712 600', '860 164 820 140 810 210 880 210', '898 190 960 184 962 200 918 206 916 240 940 250 940 268 832 272 832 254 890 248'],
    road: ['M285 332Q310 280 362 250L454 210 510 202 530 220 540 260 562 276 640 280 684 276M362 250 340 78M562 284V360Q570 390 600 408L640 432Q680 436 694 400L684 276 668 110M668 100 560 114 534 160 510 202M668 100 662 60M792 70 808 294 968 276 962 190 930 60Q920 40 890 42L856 64 792 70M640 0 668 60M488 550 560 418 626 456 810 434 866 444 1074 390 1100 330 1136 316 1144 240 1190 150 1335 184 1468 178 1476 300 1544 322M1078 464 1070 717M410 717 500 620'],
    foot: '' }
];
let base = '', roads = '';
sheets.forEach(t => {
  const open = `<g transform="translate(${t.o}) scale(${t.k})">`;
  base += `${open}<path class="park" d="${t.park}"/>${t.lake ? `<path class="lake" d="${t.lake}"/>` : ''}<path class="bld" d="${t.bld.map(b => 'M' + b + 'z').join('')}"/></g>`;
  roads += `${open}<path class="foot" d="${t.foot}"/>${t.road.map((r, i) => `<path class="road" d="${r}" ${i ? 'style="stroke-width:1.5"' : ''}/>`).join('')}</g>`;
});
const line = (c, d) => `<path class="${c}" d="${d}"/>`;
const rail = d => line('rail', d) + line('railw', d);
let m = base + roads;
m += line('wide', 'M507 142 447 323 403 440 382 503') + '<path d="M382 503 330 679" stroke="#dadada" stroke-width="22"/>';
m += rail('M497 142 436 323 391 440 374 503 328 679') + rail('M520 142 461 323 417 440 395 503 343 679');
m += line('redthin', 'M501 142 441 323 396 440 378 503') + line('redthin', 'M515 142 455 323 412 440');
m += line('red', 'M516 142 505 177M487 190 480 215M387 503 335 679M380 505 328 679M412 430 405 465');
m += rail('M263 279 400 327 430 341 520 368 700 423 800 454 890 490 944 518 965 537 1056 617 1120 679') + rail('M263 286 400 334 450 346 550 377 690 426 800 461 890 497 935 521 1040 622 1090 679');
m += line('redthin', 'M263 277 403 322 520 360 700 423 800 456 900 494 965 537 1048 600 1135 679');
m += line('red', 'M263 267 367 303 473 335 520 349 580 370 700 420 800 450 947 508 958 516 1010 555 1155 679');
m += line('red', 'M263 292 310 306 420 346 473 368 540 388 600 400M580 370 640 398 700 426 800 463 890 500 965 540 1048 600');
m += line('red', 'M1120 142 1083 262 1070 290 1020 397 958 516');
m += line('red', 'M1250 144 1310 153 1503 200 1530 205M1310 145 1360 157 1503 191 1530 192');
m += '<path d="M1253 142h58l-5 12-30 10-20-10z" fill="#ffdcdc" opacity=".7"/><circle cx="1069" cy="606" r="26" fill="#ffdcdc" opacity=".6"/>';
m += '<circle cx="438" cy="343" r="6" fill="#a4122a"/><circle cx="1057" cy="612" r="6" fill="#c8102e"/>';
[[863, 153], [864, 168], [702, 224], [866, 310], [736, 338], [725, 421], [1081, 264], [1264, 145], [1298, 145]].forEach(([x, y]) => { m += `<circle class="halt" cx="${x}" cy="${y}" r="6"/>`; });
const names = {
  '': [['三环线', 507, 192, -73], ['三环线', 405, 487, -73], ['三环线', 362, 550, -73], ['星湖三路', 689, 180, 90], ['星湖二路', 729, 197, 90], ['星湖一路', 794, 196, 90], ['求是一路', 921, 230, 90], ['求是二路', 847, 250, 90], ['回归路', 983, 277, 93], ['星湖路', 784, 283, 0], ['星湖南路', 959, 351, 0], ['北湖路', 899, 406, 0], ['广八路', 1066, 340, -65], ['八一路', 1363, 175, 14], ['八一路', 1416, 169, 14], ['群光东路', 571, 473, -68], ['群光南路', 472, 517, 22], ['珞狮路', 413, 409, -77], ['路', 715, 644, 90], ['路', 410, 145, -30]],
  stop: [['校车1号线-信', 701, 242], ['息学部十六舍', 701, 264], ['站', 702, 286], ['大循环--信息', 864, 185], ['学部图书馆', 864, 207], ['大循环--信息', 865, 327], ['学部一教', 866, 349], ['校车1号线-珞', 736, 356], ['喻二门站', 736, 378], ['珞喻路广埠屯', 725, 439], ['站', 725, 461], ['广八路邱家村', 1081, 281], ['站', 1081, 303], ['八一路东湖新', 1281, 162], ['村站', 1281, 184]],
  metro: [['街道口', 438, 302], ['Jiedaokou', 438, 325], ['广埠屯', 1057, 570], ['Guangbutun', 1057, 594]],
  ref: [[9, 266, 263, 15], [15, 300, 276, 15], [15, 337, 288, 15], [18, 369, 299, 15], [518, 280, 310, 15], [15, 409, 353, 15], [518, 443, 365, 15], [521, 484, 379, 15], [18, 506, 346, 15], [59, 538, 355, 15], [510, 572, 366, 15], [518, 613, 378, 15], [18, 656, 393, 15], [15, 688, 405, 15], [25, 528, 392, 15], [15, 559, 400, 15], [536, 605, 414, 8], [25, 656, 430, 15], [536, 445, 262, -72], [66, 430, 441, -75], [66, 377, 591, -75], [6, 351, 675, -75], [18, 810, 445, 15], [518, 848, 457, 18], [25, 886, 472, 20], [15, 917, 484, 20], [510, 798, 478, 17], [521, 852, 498, 20], [536, 893, 513, 22], [538, 935, 537, 27], [15, 975, 564, 35], [25, 1002, 533, 40], [18, 1117, 630, 42], [510, 1110, 672, 40], [564, 1099, 157, -72], [564, 1024, 361, -65], [564, 1368, 147, 8]]
};
Object.entries(names).forEach(([c, list]) => list.forEach(([t, x, y, r = 0]) => { m += label(t, x, y - 1, r, `class="${c}"`); }));
m += '<path d="M887 417h12v9q-1 4-5 4t-6-4z" fill="#3ac6bd"/><path d="M903 413q4-4 8-3 4 1 3 5l-2 11q-1 4-5 4t-5-4z" fill="#e84a94"/><path d="M915 421l5-7-4-2 2-5 7-2 4-7 9 7-1 6-6 5-3 5-6-4z" fill="#ffa000"/><circle cx="896" cy="409" r="9" fill="#3ac6bd" stroke="#fff" stroke-width="3.500"/><circle cx="896" cy="409" r="11" stroke="#888" stroke-width=".7"/>';
m += '<text class="credit" x="271" y="664" textLength="268">© OpenStreetMap - Map data ©2024 OpenStreetMap</text>';
put('map', m);
```
